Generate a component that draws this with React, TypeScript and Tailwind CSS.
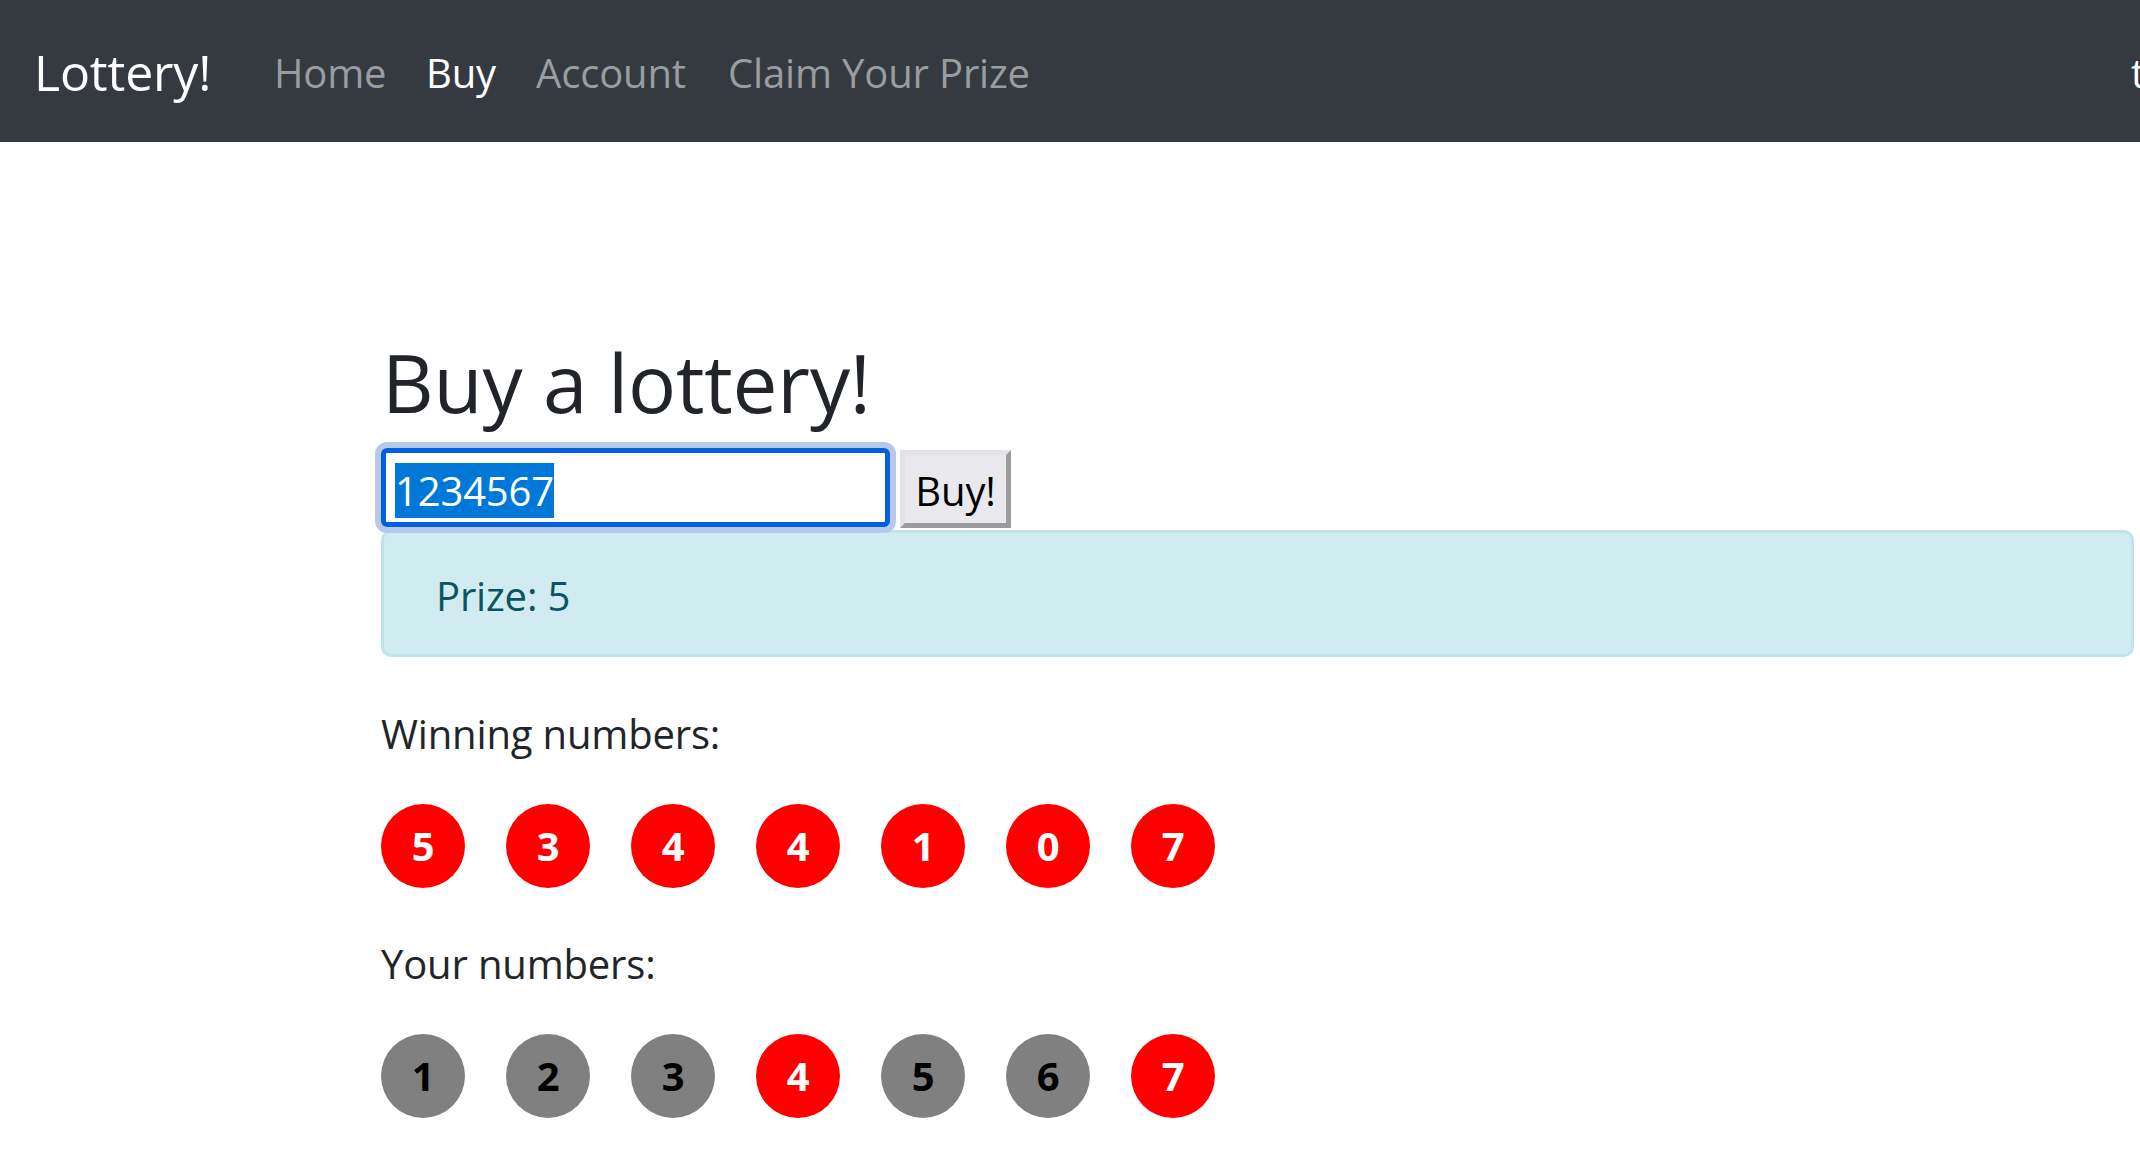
import React from "react";

const winning = [5, 3, 4, 4, 1, 0, 7];
const yours = [1, 2, 3, 4, 5, 6, 7];

function Ball({ n, hit }: { n: number; hit: boolean }) {
  return (
    <div
      className={
        hit
          ? "w-[84px] h-[84px] shrink-0 rounded-full bg-[#ff0000] text-white flex items-center justify-center text-[40px] font-bold leading-none"
          : "w-[84px] h-[84px] shrink-0 rounded-full bg-[#808080] text-black flex items-center justify-center text-[40px] font-bold leading-none"
      }
    >
      {n}
    </div>
  );
}

export default function App() {
  return (
    <div className="min-h-[1154px] w-[2140px] bg-white font-['Open_Sans',sans-serif] tracking-[-0.01em] text-[#212529] overflow-hidden">
      <nav className="h-[142px] w-[2140px] bg-[#343a40] flex items-center pt-[3px] overflow-hidden">
        <div className="ml-[34px] w-[220px] shrink-0 text-[50px] leading-[75px] text-white whitespace-nowrap">
          Lottery!
        </div>
        <div className="flex items-center text-[40px] leading-[60px] whitespace-nowrap">
          <a className="w-[152px] shrink-0 pl-[20px] text-[#9a9da0]">Home</a>
          <a className="w-[110px] shrink-0 pl-[20px] text-white">Buy</a>
          <a className="w-[192px] shrink-0 pl-[20px] text-[#9a9da0]">Account</a>
          <a className="w-[340px] shrink-0 pl-[20px] text-[#9a9da0]">Claim Your Prize</a>
        </div>
        <div className="flex-1" />
        <div className="w-[9px] shrink-0 overflow-hidden whitespace-nowrap text-[40px] leading-[60px] text-white">
          t
        </div>
      </nav>

      <main className="ml-[381px] w-[1753px] pt-[192px]">
        <h2 className="text-[80px] leading-[96px] font-normal mb-[20px] pl-[1px]">Buy a lottery!</h2>

        <div className="flex items-start h-[80px]">
          <div className="-mt-[2px] w-[509px] h-[79px] border-[5px] border-[#0060df] rounded-[6px] shadow-[0_0_0_6px_#b6c9ec] bg-white flex items-center pl-[9px] pt-[6px]">
            <span className="bg-[#0078d7] text-white text-[40px] leading-[55px]">1234567</span>
          </div>
          <button className="ml-[10px] w-[111px] h-[78px] bg-[#e9e9ed] border-[5px] border-solid border-t-[#e2e2e4] border-l-[#e2e2e4] border-r-[#9b9b9b] border-b-[#9b9b9b] text-black text-[40px] leading-none flex items-center justify-center pt-[4px]">
            Buy!
          </button>
        </div>

        <div className="h-[127px] rounded-[10px] border-[3px] border-[#bee5eb] bg-[#d1ecf1] text-[#0c5460] text-[40px] leading-[60px] pl-[52px] pt-[33px]">
          Prize: 5
        </div>

        <p className="mt-[47px] text-[40px] leading-[60px]">Winning numbers:</p>
        <div className="mt-[40px] flex gap-[41px]">
          {winning.map((n, i) => (
            <Ball key={i} n={n} hit={true} />
          ))}
        </div>

        <p className="mt-[46px] text-[40px] leading-[60px]">Your numbers:</p>
        <div className="mt-[40px] flex gap-[41px]">
          {yours.map((n, i) => (
            <Ball key={i} n={n} hit={winning[i] === n} />
          ))}
        </div>
      </main>
    </div>
  );
}
